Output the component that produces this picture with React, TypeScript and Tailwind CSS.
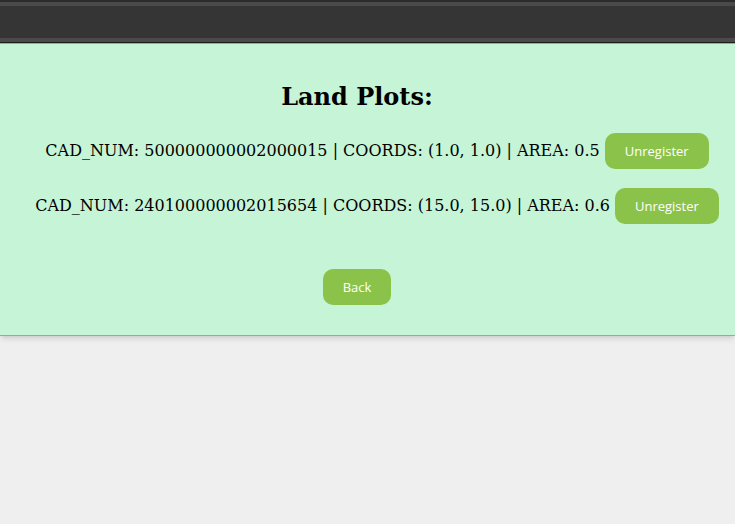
import React from 'react';

const plots = [
  { cadNum: '500000000002000015', coords: '(1.0, 1.0)', area: '0.5' },
  { cadNum: '240100000002015654', coords: '(15.0, 15.0)', area: '0.6' },
];

const btn =
  "h-9 shrink-0 px-5 rounded-[10px] bg-[#8bc34a] text-white text-[13px] font-['Open_Sans',sans-serif] leading-none";

export default function App() {
  return (
    <div className="min-h-[524px] w-full bg-[#efefef]">
      {/* Top bar */}
      <div className="border-t-2 border-[#2b2b2b] bg-[#353535]">
        <div className="h-1 bg-[#4a4a4a]" />
        <div className="h-8" />
        <div className="h-1 bg-[#4a4a4a]" />
        <div className="h-px bg-[#1e1e1e]" />
      </div>

      {/* Panel */}
      <div className="border-y border-[#8bc34a] bg-[#c6f4d7] pt-[39px] pb-[30px] pr-[21px] shadow-md font-['DejaVu_Serif',serif] text-black">
        <h2 className="text-center text-[24px] font-bold leading-[28px]">Land Plots:</h2>

        <ul className="mt-[22px] flex flex-col gap-[19px] pl-10">
          {plots.map((p) => (
            <li key={p.cadNum} className="flex items-center justify-center gap-[5px] text-[16px]">
              <span className="shrink-0 whitespace-nowrap">
                CAD_NUM: {p.cadNum} | COORDS: {p.coords} | AREA: {p.area}
              </span>
              <button className={btn}>Unregister</button>
            </li>
          ))}
        </ul>

        <div className="mt-[45px] flex justify-center">
          <button className={btn}>Back</button>
        </div>
      </div>
    </div>
  );
}
